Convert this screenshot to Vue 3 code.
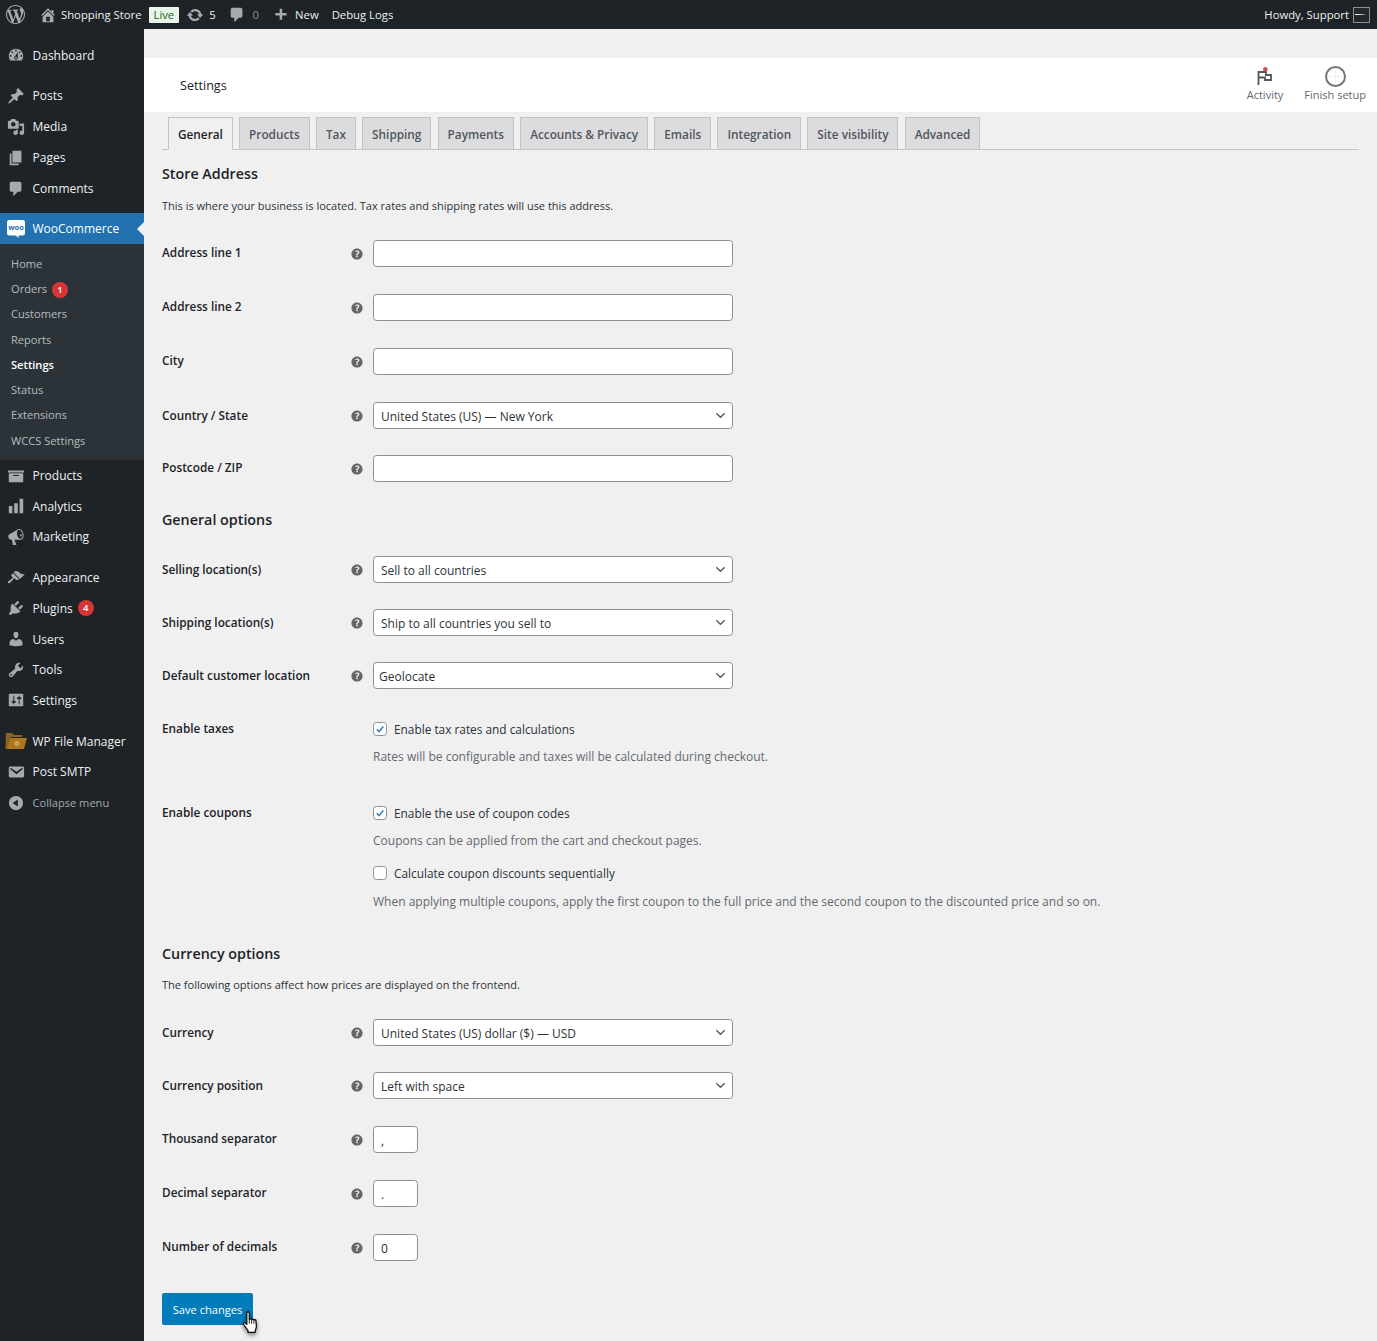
<script setup>
const P = {
  dashboard: 'M3.76 16h12.48c1.1-1.37 1.76-3.11 1.76-5 0-4.42-3.58-8-8-8s-8 3.58-8 8c0 1.89.66 3.63 1.76 5zM10 4c.55 0 1 .45 1 1s-.45 1-1 1-1-.45-1-1 .45-1 1-1zM6 6c.55 0 1 .45 1 1s-.45 1-1 1-1-.45-1-1 .45-1 1-1zm8 0c.55 0 1 .45 1 1s-.45 1-1 1-1-.45-1-1 .45-1 1-1zm-5.37 5.55L12 7v6c0 1.1-.9 2-2 2s-2-.9-2-2c0-.57.24-1.08.63-1.45zM4 10c.55 0 1 .45 1 1s-.45 1-1 1-1-.45-1-1 .45-1 1-1zm12 0c.55 0 1 .45 1 1s-.45 1-1 1-1-.45-1-1 .45-1 1-1zm-5 3c0-.55-.45-1-1-1s-1 .45-1 1 .45 1 1 1 1-.45 1-1z',
  pin: 'M10.44 3.02l1.82-1.82 6.36 6.35-1.83 1.82c-1.05-.68-2.48-.57-3.41.36l-.75.75c-.92.93-1.04 2.35-.35 3.41l-1.83 1.82-2.41-2.41-2.8 2.79c-.42.42-3.38 2.71-3.8 2.29s1.86-3.39 2.28-3.81l2.79-2.79L4.1 9.36l1.83-1.82c1.05.69 2.48.57 3.4-.36l.75-.75c.93-.92 1.05-2.35.36-3.41z',
  media: 'M13 11V4c0-.55-.45-1-1-1h-1.67L9 1H5L3.67 3H2c-.55 0-1 .45-1 1v7c0 .55.45 1 1 1h10c.55 0 1-.45 1-1zM7 4.5c1.38 0 2.5 1.12 2.5 2.5S8.38 9.5 7 9.5 4.5 8.38 4.5 7 5.62 4.5 7 4.5zM14 6h5v10.5c0 1.38-1.12 2.5-2.5 2.5S14 17.88 14 16.5s1.12-2.5 2.5-2.5c.17 0 .34.02.5.05V9h-3V6zm-4 8.05V13h2v3.5c0 1.38-1.12 2.5-2.5 2.5S7 17.88 7 16.5 8.12 14 9.5 14c.17 0 .34.02.5.05z',
  page: 'M6 15V2h10v13H6zm-1 1h8v2H3V5h2v11z',
  comment: 'M5 2h9c1.1 0 2 .9 2 2v7c0 1.1-.9 2-2 2h-2l-5 5v-5H5c-1.1 0-2-.9-2-2V4c0-1.1.9-2 2-2z',
  archive: 'M19 4v2H1V4h18zM2 7h16v10H2V7zm11 3V9H7v1h6z',
  chart: 'M18 18V2h-4v16h4zm-6 0V7H8v11h4zm-6 0v-8H2v8h4z',
  megaphone: 'M18.15 5.94c.46 1.62.38 3.22-.02 4.48-.42 1.28-1.26 2.18-2.3 2.48-.16.06-.26.06-.4.06-.06.02-.12.02-.18.02-.06.02-.14.02-.22.02h-6.8l2.22 5.5c.02.14-.06.26-.14.34-.08.1-.24.16-.34.16H6.95c-.1 0-.26-.06-.34-.16-.08-.08-.16-.2-.14-.34l-1-5.5H4.25l-.02-.02c-.5.06-1.08-.18-1.54-.62s-.88-1.08-1.06-1.88c-.24-.8-.2-1.56-.02-2.2.18-.62.58-1.08 1.06-1.3l.02-.02 9-5.4c.1-.06.18-.1.24-.16.06-.04.14-.08.24-.12.16-.08.28-.12.5-.18 1.04-.3 2.24.1 3.22.98s1.84 2.24 2.26 3.86zm-2.58 5.98h-.02c.4-.1.74-.34 1.04-.7.58-.7.86-1.76.86-3.04 0-.64-.1-1.3-.26-1.98-.34-1.36-1.02-2.5-1.78-3.24s-1.68-1.1-2.46-.88c-.82.22-1.4.96-1.7 2-.32 1.04-.28 2.36.06 3.72.38 1.36 1 2.5 1.8 3.24.78.74 1.62 1.1 2.46.88zm-.38-5.32c.22-.06.46.02.7.26.22.24.42.58.54 1s.14.8.04 1.1-.26.52-.48.58-.46-.02-.7-.26-.42-.58-.54-1c-.1-.42-.14-.8-.04-1.1s.26-.52.48-.58z',
  brush: 'M14.48 11.06L7.41 3.99l1.5-1.5c.5-.56 2.3-.47 3.51.32 1.21.8 1.43 1.28 2.91 2.1 1.18.64 2.45 1.26 4.45.85zm-.71.71L6.7 4.7 4.93 6.47c-.39.39-.39 1.02 0 1.41l1.06 1.06c.39.39.39 1.03 0 1.42-.6.6-1.43 1.11-2.21 1.69-.35.26-.7.53-1.01.84C1.43 13.23.4 14.84 1.15 15.6c.75.75 2.36-.28 3.7-1.63.31-.31.58-.66.84-1.01.58-.78 1.09-1.61 1.69-2.21.39-.39 1.02-.39 1.41 0l1.06 1.06c.39.39 1.02.39 1.41 0z',
  plug: 'M13.11 4.36L9.87 7.6 8 5.73l3.24-3.24c.35-.34 1.05-.2 1.56.32.52.51.66 1.21.31 1.55zm-8 1.77l.91-1.12 9.01 9.01-1.19.84c-.71.71-2.63 1.16-3.82 1.16H6.14L4.9 17.26c-.59.59-1.54.59-2.12 0-.59-.58-.59-1.53 0-2.12l1.24-1.24v-3.88c0-1.13.4-3.19 1.09-3.89zm7.26 3.97l3.24-3.24c.34-.35 1.04-.21 1.55.31.52.51.66 1.21.31 1.55l-3.24 3.25z',
  user: 'M10 9.25c-2.27 0-2.73-3.44-2.73-3.44C7 4.02 7.82 2 9.97 2c2.16 0 2.98 2.02 2.71 3.81 0 0-.41 3.44-2.68 3.44zm0 2.57L12.72 10c2.39 0 4.52 2.33 4.52 4.53v2.49s-3.65 1.13-7.24 1.13c-3.65 0-7.24-1.13-7.24-1.13v-2.49c0-2.25 1.94-4.48 4.47-4.48z',
  wrench: 'M16.68 9.77c-1.34 1.34-3.3 1.67-4.95.99l-5.41 6.52c-.99.99-2.59.99-3.58 0s-.99-2.59 0-3.57l6.52-5.42c-.68-1.65-.35-3.61.99-4.95 1.28-1.28 3.12-1.62 4.72-1.06l-2.89 2.89 2.82 2.82 2.86-2.87c.53 1.58.18 3.39-1.08 4.65zM3.81 16.21c.4.39 1.04.39 1.43 0 .4-.4.4-1.04 0-1.43-.39-.4-1.03-.4-1.43 0-.39.39-.39 1.03 0 1.43z',
  sliders: 'M18 16V4c0-.55-.45-1-1-1H3c-.55 0-1 .45-1 1v12c0 .55.45 1 1 1h14c.55 0 1-.45 1-1zM8 11h1c.55 0 1 .45 1 1s-.45 1-1 1H8v1.5c0 .28-.22.5-.5.5s-.5-.22-.5-.5V13H6c-.55 0-1-.45-1-1s.45-1 1-1h1V5.5c0-.28.22-.5.5-.5s.5.22.5.5V11zm5-2h-1c-.55 0-1-.45-1-1s.45-1 1-1h1V5.5c0-.28.22-.5.5-.5s.5.22.5.5V7h1c.55 0 1 .45 1 1s-.45 1-1 1h-1v5.5c0 .28-.22.5-.5.5s-.5-.22-.5-.5V9z',
  mail: 'M3.87 4h13.25C18.37 4 19 4.59 19 5.79v8.42c0 1.19-.63 1.79-1.88 1.79H3.87c-1.25 0-1.88-.6-1.88-1.79V5.79c0-1.2.63-1.79 1.88-1.79zm6.62 8.6l6.74-5.53c.24-.2.43-.66.13-1.07-.29-.41-.82-.42-1.17-.17l-5.7 3.86L4.8 5.83c-.35-.25-.88-.24-1.17.17-.3.41-.11.87.13 1.07z',
  collapse: 'M10 2.16c4.33 0 7.84 3.51 7.84 7.84s-3.51 7.84-7.84 7.84S2.16 14.33 2.16 10 5.71 2.16 10 2.16zm2 11.72V6.12L6.18 9.97z',
  home: 'M16 8.5l1.53 1.53-1.06 1.06L10 4.62l-6.47 6.47-1.06-1.06L10 2.5l4 4v-2h2v4zm-6-2.46l6 5.99V18H4v-5.97zM12 17v-5H8v5h4z',
  update: 'M10.2 3.28c3.53 0 6.43 2.61 6.92 6h2.08l-3.5 4-3.5-4h2.32c-.45-1.97-2.21-3.45-4.32-3.45-1.45 0-2.73.71-3.54 1.78L4.95 5.66C6.23 4.2 8.11 3.28 10.2 3.28zm-.4 13.44c-3.52 0-6.43-2.61-6.92-6H.8l3.5-4c1.17 1.33 2.33 2.67 3.5 4H5.48c.45 1.97 2.21 3.45 4.32 3.45 1.45 0 2.73-.71 3.54-1.78l1.71 1.95c-1.28 1.46-3.15 2.38-5.25 2.38z',
  plus: 'M17 7v3h-5v5H9v-5H4V7h5V2h3v5h5z',
  wp: 'M20 10c0-5.51-4.49-10-10-10C4.48 0 0 4.49 0 10c0 5.52 4.48 10 10 10 5.51 0 10-4.48 10-10zM7.78 15.37L4.37 6.22c.55-.02 1.17-.08 1.17-.08.5-.06.44-1.13-.06-1.11 0 0-1.45.11-2.37.11-.18 0-.37 0-.58-.01C4.12 2.69 6.87 1.11 10 1.11c2.33 0 4.45.87 6.05 2.34-.68-.11-1.65.39-1.65 1.58 0 .74.45 1.36.9 2.1.35.61.55 1.36.55 2.46 0 1.49-1.4 5-1.4 5l-3.03-8.37c.54-.02.82-.17.82-.17.5-.05.44-1.25-.06-1.22 0 0-1.44.12-2.38.12-.87 0-2.33-.12-2.33-.12-.5-.03-.56 1.2-.06 1.22l.92.08 1.26 3.41zM17.41 10c.24-.64.74-1.87.43-4.25.7 1.29 1.05 2.71 1.05 4.25 0 3.29-1.73 6.24-4.4 7.78.97-2.59 1.94-5.2 2.92-7.78zM6.1 18.09C3.12 16.65 1.11 13.53 1.11 10c0-1.3.23-2.48.72-3.59C3.25 10.3 4.67 14.2 6.1 18.09zm4.03-6.63l2.58 6.98c-.86.29-1.76.45-2.71.45-.79 0-1.57-.11-2.29-.33.81-2.38 1.62-4.74 2.42-7.1z',
  help: 'M17 10c0-3.87-3.14-7-7-7-3.87 0-7 3.13-7 7s3.13 7 7 7c3.86 0 7-3.13 7-7zm-6.3 1.48H9.14v-.43c0-.38.08-.7.24-.98s.46-.57.88-.89c.41-.29.68-.53.81-.71.14-.18.2-.39.2-.62 0-.25-.09-.44-.28-.58-.19-.13-.45-.19-.79-.19-.58 0-1.25.19-2 .57l-.64-1.28c.87-.49 1.8-.74 2.77-.74.81 0 1.45.2 1.92.58.48.39.71.91.71 1.55 0 .43-.09.8-.29 1.11-.19.32-.57.67-1.11 1.05-.38.28-.61.49-.71.63-.1.15-.15.34-.15.57v.36zm-1.47 2.23c-.19-.18-.28-.43-.28-.75 0-.33.09-.58.27-.76s.44-.27.78-.27c.33 0 .58.09.76.27.18.19.27.44.27.76 0 .31-.09.56-.27.74-.18.19-.43.28-.76.28-.34 0-.59-.09-.77-.27z'
}

const menuGroups = [
  [{ t: 'Dashboard', i: 'dashboard' }],
  [{ t: 'Posts', i: 'pin' }, { t: 'Media', i: 'media' }, { t: 'Pages', i: 'page' }, { t: 'Comments', i: 'comment' }],
  [{ t: 'WooCommerce', woo: true }],
  [{ t: 'Products', i: 'archive' }, { t: 'Analytics', i: 'chart' }, { t: 'Marketing', i: 'megaphone' }],
  [{ t: 'Appearance', i: 'brush' }, { t: 'Plugins', i: 'plug', badge: 4 }, { t: 'Users', i: 'user' }, { t: 'Tools', i: 'wrench' }, { t: 'Settings', i: 'sliders' }],
  [{ t: 'WP File Manager', fm: true }, { t: 'Post SMTP', i: 'mail' }, { t: 'Collapse menu', i: 'collapse', dim: true }]
]
const submenu = [
  { t: 'Home' }, { t: 'Orders', badge: 1 }, { t: 'Customers' }, { t: 'Reports' },
  { t: 'Settings', cur: true }, { t: 'Status' }, { t: 'Extensions' }, { t: 'WCCS Settings' }
]
const tabs = ['General', 'Products', 'Tax', 'Shipping', 'Payments', 'Accounts & Privacy', 'Emails', 'Integration', 'Site visibility', 'Advanced']

const addressRows = [
  { l: 'Address line 1', type: 'text' },
  { l: 'Address line 2', type: 'text' },
  { l: 'City', type: 'text' },
  { l: 'Country / State', type: 'select', v: 'United States (US) — New York' },
  { l: 'Postcode / ZIP', type: 'text' }
]
const generalRows = [
  { l: 'Selling location(s)', type: 'select', v: 'Sell to all countries' },
  { l: 'Shipping location(s)', type: 'select', v: 'Ship to all countries you sell to' },
  { l: 'Default customer location', type: 'select', v: 'Geolocate', native: true }
]
const currencyRows = [
  { l: 'Currency', type: 'select', v: 'United States (US) dollar ($) — USD' },
  { l: 'Currency position', type: 'select', v: 'Left with space' },
  { l: 'Thousand separator', type: 'short', v: ',' },
  { l: 'Decimal separator', type: 'short', v: '.' },
  { l: 'Number of decimals', type: 'short', v: '0' }
]
</script>

<template>
  <div class="page">
    <header class="adminbar">
      <div class="bar-left">
        <svg class="bar-wp" viewBox="0 0 20 20"><path :d="P.wp" /></svg>
        <svg class="bar-home" viewBox="0 0 20 20"><path :d="P.home" /></svg>
        <span class="bar-site">Shopping Store</span>
        <span class="live">Live</span>
        <svg class="bar-upd" viewBox="0 0 20 20"><path :d="P.update" /></svg>
        <span class="bar-n five">5</span>
        <svg class="bar-com" viewBox="0 0 20 20"><path :d="P.comment" /></svg>
        <span class="bar-n dim">0</span>
        <svg class="bar-plus" viewBox="0 0 20 20"><path :d="P.plus" /></svg>
        <span class="bar-new">New</span>
        <span class="bar-debug">Debug Logs</span>
      </div>
      <div class="bar-right">
        <span>Howdy, Support</span>
        <span class="avatar"><i></i></span>
      </div>
    </header>

    <div class="shell">
      <aside class="side">
        <div v-for="(g, gi) in menuGroups" :key="gi" class="mgroup">
          <template v-for="m in g" :key="m.t">
            <div class="mitem" :class="{ active: m.woo, dimmed: m.dim }">
              <span class="micon">
                <svg v-if="m.i" viewBox="0 0 20 20"><path :d="P[m.i]" /></svg>
                <svg v-else-if="m.woo" class="woo" viewBox="0 0 18 18">
                  <path d="M2.2 0h13.6A2.2 2.2 0 0 1 18 2.2v11a2.2 2.2 0 0 1-2.2 2.2h-4.6l.9 2.6-3.6-2.6H2.2A2.2 2.2 0 0 1 0 13.2v-11A2.2 2.2 0 0 1 2.2 0z" fill="#fff" />
                  <text x="9" y="10.4" text-anchor="middle" class="woo-t">woo</text>
                </svg>
                <svg v-else-if="m.fm" class="fm" viewBox="0 0 22 18">
                  <path d="M1 1h6l2 2h8v2H6L2 17H0.4z" fill="#8a6320" />
                  <path d="M5.5 6H22l-3 11H1.6z" fill="#b0761f" />
                  <circle cx="12" cy="11.5" r="2.6" fill="#caa050" />
                </svg>
              </span>
              <span class="mlabel">{{ m.t }}</span>
              <span v-if="m.badge" class="badge">{{ m.badge }}</span>
              <span v-if="m.woo" class="notch"></span>
            </div>
            <div v-if="m.woo" class="sub">
              <div v-for="s in submenu" :key="s.t" class="sitem" :class="{ cur: s.cur }">
                {{ s.t }}<span v-if="s.badge" class="badge">{{ s.badge }}</span>
              </div>
            </div>
          </template>
        </div>
      </aside>

      <main class="main">
        <div class="wc-header">
          <span class="wc-title">Settings</span>
          <div class="wc-actions">
            <div class="wc-act activity">
              <svg class="flag" viewBox="0 0 16 18">
                <path d="M1.5 18V5H9V8H14V13H8V10.5H1.5" fill="none" stroke="#50575e" stroke-width="1.8" />
                <circle cx="8.3" cy="2.3" r="2.3" fill="#d94f4f" />
              </svg>
              <span>Activity</span>
            </div>
            <div class="wc-act setup">
              <span class="ring"></span>
              <span>Finish setup</span>
            </div>
          </div>
        </div>

        <div class="wrap">
          <nav class="tabs">
            <span v-for="(t, i) in tabs" :key="t" class="tab" :class="{ on: i === 0 }">{{ t }}</span>
          </nav>

          <h2 class="h-first">Store Address</h2>
          <p class="intro">This is where your business is located. Tax rates and shipping rates will use this address.</p>
          <div class="rows addr">
            <div v-for="r in addressRows" :key="r.l" class="row" :class="r.type">
              <label class="lab">{{ r.l }}</label>
              <svg class="help" viewBox="0 0 20 20"><path :d="P.help" /></svg>
              <div v-if="r.type === 'select'" class="sel"><span>{{ r.v }}</span><svg viewBox="0 0 12 8"><path d="M1.2 1.5 6 6l4.8-4.5" /></svg></div>
              <input v-else class="inp" type="text" />
            </div>
          </div>

          <h2 class="h-gen">General options</h2>
          <div class="rows gen">
            <div v-for="r in generalRows" :key="r.l" class="row" :class="r.type">
              <label class="lab">{{ r.l }}</label>
              <svg class="help" viewBox="0 0 20 20"><path :d="P.help" /></svg>
              <div class="sel" :class="{ nat: r.native }"><span>{{ r.v }}</span><svg viewBox="0 0 12 8"><path d="M1.2 1.5 6 6l4.8-4.5" /></svg></div>
            </div>
          </div>

          <div class="opt tax">
            <label class="lab">Enable taxes</label>
            <div class="opt-body">
              <div class="chk"><span class="box on"><svg viewBox="0 0 16 16"><path d="M3.6 8.2 6.7 11.4 12.5 4.6" /></svg></span>Enable tax rates and calculations</div>
              <p class="hint">Rates will be configurable and taxes will be calculated during checkout.</p>
            </div>
          </div>

          <div class="opt coupons">
            <label class="lab">Enable coupons</label>
            <div class="opt-body">
              <div class="chk"><span class="box on"><svg viewBox="0 0 16 16"><path d="M3.6 8.2 6.7 11.4 12.5 4.6" /></svg></span>Enable the use of coupon codes</div>
              <p class="hint">Coupons can be applied from the cart and checkout pages.</p>
              <div class="chk second"><span class="box"></span>Calculate coupon discounts sequentially</div>
              <p class="hint long">When applying multiple coupons, apply the first coupon to the full price and the second coupon to the discounted price and so on.</p>
            </div>
          </div>

          <h2 class="h-cur">Currency options</h2>
          <p class="intro cur-intro">The following options affect how prices are displayed on the frontend.</p>
          <div class="rows curr">
            <div v-for="r in currencyRows" :key="r.l" class="row" :class="r.type">
              <label class="lab">{{ r.l }}</label>
              <svg class="help" viewBox="0 0 20 20"><path :d="P.help" /></svg>
              <div v-if="r.type === 'select'" class="sel"><span>{{ r.v }}</span><svg viewBox="0 0 12 8"><path d="M1.2 1.5 6 6l4.8-4.5" /></svg></div>
              <input v-else class="inp short" type="text" :value="r.v" />
            </div>
          </div>

          <div class="save-wrap">
            <button class="save" type="button">Save changes</button>
            <svg class="cursor" viewBox="0 0 20 26">
              <path d="M6 2.2c.9-.9 2.3-.3 2.3 1v6.4c.3-.9 2-.9 2.3.2.4-.9 2-.8 2.3.3.5-.7 2-.5 2.1.8l.4 5.1c.1 2-.6 3.3-1.2 4.7v1.6H7v-1.8c-1.2-1.6-3.5-4.4-4.4-6.3-.5-1.2.9-2.2 1.9-1.2l1.3 1.4V3.2c0-.4 0-.7.2-1z" fill="#fff" stroke="#111" stroke-width="1.3" stroke-linejoin="round" />
              <path d="M8.3 9.6v4M10.6 9.8v4M12.9 10.2v3.6" stroke="#111" stroke-width=".9" fill="none" />
            </svg>
          </div>
        </div>
      </main>
    </div>
  </div>
</template>

<style>
html, body { margin: 0; background: #f0f0f1; }
</style>

<style scoped>
.page {
  width: 1377px;
  height: 1341px;
  overflow: hidden;
  font-family: "Open Sans", "Noto Sans", sans-serif;
  color: #1d2327;
  background: #f0f0f1;
  --fs: 11.8px;
}
.adminbar {
  height: 29px;
  background: #1d2327;
  display: flex;
  justify-content: space-between;
  align-items: center;
  color: #f0f0f1;
  font-size: 11.3px;
}
.bar-left, .bar-right { display: flex; align-items: center; }
.bar-left svg { fill: #a7aaad; display: block; }
.bar-wp { width: 19px; height: 19px; margin-left: 6px; }
.bar-home { width: 18px; height: 18px; margin-left: 14px; }
.bar-site { margin-left: 4px; }
.live {
  background: #e8f5e9;
  color: #1b5e20;
  font-size: 11.2px;
  margin-left: 7px;
  height: 16px;
  line-height: 16px;
  padding: 0 5px;
  border-radius: 1px;
}
.bar-upd { width: 18px; height: 18px; margin-left: 7px; }
.bar-n.five { margin-left: 5px; }
.bar-n.dim { color: #8c8f94; margin-left: 6.5px; }
.bar-com { width: 18px; height: 18px; margin-left: 12.5px; }
.bar-plus { width: 17px; height: 17px; margin: 2px 0 0 13px; }
.bar-new { margin-left: 6px; }
.bar-debug { margin-left: 13px; }
.bar-right { gap: 4px; margin-right: 7px; }
.avatar {
  width: 17px;
  height: 16px;
  border: 1px solid #8c8f94;
  background: #23282d;
  display: flex;
  align-items: center;
  padding-left: 1px;
  box-sizing: border-box;
}
.avatar i { width: 10px; height: 1.6px; background: linear-gradient(90deg, #eee 40%, #666); display: block; }

.shell { display: flex; height: 1312px; }
.side {
  width: 144px;
  flex: none;
  background: #1d2327;
  padding-top: 11.2px;
  box-sizing: border-box;
}
.mgroup { margin-bottom: 10.1px; }
.mgroup:nth-child(1) { margin-bottom: 9.5px; }
.mgroup:nth-child(2) { margin-bottom: 9.1px; }
.mgroup:nth-child(2) .mitem { height: 31px; }
.mgroup:nth-child(3) { margin-bottom: 0; }
.mgroup:nth-child(4), .mgroup:nth-child(5) { margin-bottom: 10.4px; }
.mitem {
  height: 30.6px;
  display: flex;
  align-items: center;
  position: relative;
  color: #f0f0f1;
  font-size: 12px;
}
.micon {
  width: 32.5px;
  height: 30.6px;
  flex: none;
  display: flex;
  align-items: center;
  justify-content: center;
  padding-right: 0.5px;
  box-sizing: border-box;
}
.micon svg { width: 18px; height: 18px; fill: #a7aaad; display: block; }
.micon .woo { fill: none; }
.micon .fm { width: 22px; height: 18px; margin-left: -1px; }
.woo-t { font-size: 7.4px; font-weight: 700; fill: #2271b1; font-family: "Open Sans", sans-serif; }
.mitem.active { background: #2271b1; color: #fff; }
.mitem.dimmed { color: #a7aaad; font-size: 11.1px; margin-top: 0.5px; }
.notch {
  position: absolute;
  right: 0;
  top: 50%;
  margin-top: -7px;
  border: 7px solid transparent;
  border-right-color: #f0f0f1;
  border-left-width: 0;
}
.badge {
  display: inline-block;
  background: #d63638;
  color: #fff;
  width: 16px;
  height: 16px;
  line-height: 16px;
  border-radius: 50%;
  font-size: 9.5px;
  text-align: center;
  margin-left: 5px;
  font-weight: 600;
}
.sub {
  background: #2c3338;
  padding: 6.7px 0 7.4px;
}
.sitem {
  height: 25.3px;
  line-height: 25.3px;
  padding-left: 11px;
  font-size: 11.1px;
  color: rgba(240, 246, 252, 0.7);
}
.sitem.cur { color: #fff; font-weight: 600; }

.main { flex: 1; min-width: 0; padding-top: 29px; }
.wc-header {
  height: 54px;
  background: #fff;
  display: flex;
  justify-content: space-between;
  align-items: center;
}
.wc-title { margin-left: 36px; font-size: 12.6px; color: #1d2327; }
.wc-actions { display: flex; align-items: stretch; height: 100%; }
.wc-act {
  display: flex;
  flex-direction: column;
  align-items: center;
  justify-content: flex-end;
  padding-bottom: 10px;
  box-sizing: border-box;
  font-size: 11px;
  color: #646970;
}
.activity { margin-right: 21px; }
.setup { margin-right: 11px; }
.flag { width: 16px; height: 18px; margin-bottom: 2px; }
.ring {
  width: 21px;
  height: 21px;
  border: 2px solid #757575;
  border-radius: 50%;
  box-sizing: border-box;
  background:
    linear-gradient(#f3f3f3, #f3f3f3) center / 100% 1px no-repeat,
    linear-gradient(#f3f3f3, #f3f3f3) center / 1px 100% no-repeat;
}

.wrap { padding: 5px 18px 0; }
.tabs {
  height: 33px;
  box-sizing: border-box;
  border-bottom: 1px solid #c3c4c7;
  padding-left: 6px;
  display: flex;
  gap: 6.2px;
  align-items: flex-start;
}
.tab {
  height: 33px;
  line-height: 33px;
  box-sizing: border-box;
  border: 1px solid #c3c4c7;
  background: #dcdcde;
  padding: 0 9px;
  font-size: 11.8px;
  font-weight: 600;
  color: #50575e;
}
.tab.on { background: #f0f0f1; border-bottom-color: #f0f0f1; color: #1d2327; }

h2 { margin: 0; font-size: 14.3px; font-weight: 600; line-height: 20px; color: #1d2327; }
.h-first { margin-top: 13.5px; }
.intro { margin: 12px 0 0; font-size: 11px; line-height: 20px; color: #2c3338; }
.rows.addr { margin-top: 24.5px; }
.row {
  display: flex;
  align-items: center;
  height: 27px;
  margin-bottom: 27px;
}
.row.select { margin-bottom: 26px; }
.lab {
  width: 186.5px;
  flex: none;
  font-size: var(--fs);
  font-weight: 600;
  color: #1d2327;
  display: block;
  line-height: 27px;
  margin-top: -2px;
}
.row.select .lab { margin-top: 0; }
.help { width: 16px; height: 16px; flex: none; margin-right: 8.5px; fill: #666; }
.inp, .sel {
  width: 360px;
  height: 27px;
  box-sizing: border-box;
  border: 1px solid #8c8f94;
  border-radius: 3.6px;
  background: #fff;
  flex: none;
  font: inherit;
  font-size: 12px;
  color: #2c3338;
  outline: none;
}
.sel {
  display: flex;
  align-items: center;
  justify-content: space-between;
  padding: 1px 6px 0 7px;
}
.sel.nat { padding-left: 5px; }
.sel svg { width: 11px; height: 7px; fill: none; stroke: #50575e; stroke-width: 1.5; margin-top: -1px; }
.inp.short { width: 45px; padding: 2px 7px 0; }

.h-gen { margin-top: 28px; }
.rows.gen { margin-top: 26px; }
.opt { display: flex; align-items: flex-start; }
.opt .lab { width: 211px; line-height: 20px; margin-top: 0; }
.opt-body { font-size: 11.85px; }
.tax { margin-top: 29px; }
.coupons { margin-top: 35px; }
.chk { display: flex; align-items: center; height: 20px; color: #2c3338; margin-top: 1px; }
.second { margin-top: 12px; }
.box {
  width: 14px;
  height: 14px;
  box-sizing: border-box;
  border: 1px solid #8c8f94;
  border-radius: 3.6px;
  background: #fff;
  margin-right: 7px;
  display: block;
}
.box svg { display: block; width: 12px; height: 12px; fill: none; stroke: #3582c4; stroke-width: 2; }
.hint { margin: 8px 0 0; line-height: 20px; color: #646970; font-size: 12px; }
.hint.long { margin-top: 9px; }
.h-cur { margin-top: 32px; }
.cur-intro { margin-top: 11px; }
.rows.curr { margin-top: 24px; }
.rows.curr .row.select + .row.select { margin-bottom: 27px; }
.save-wrap { position: relative; width: 91px; margin-top: 32px; }
.save {
  width: 91px;
  height: 32px;
  background: #007cba;
  color: #fff;
  border: 0;
  border-radius: 2px;
  font: inherit;
  font-size: 11.1px;
  padding: 0;
}
.cursor {
  position: absolute;
  left: 79px;
  top: 17px;
  width: 20px;
  height: 26px;
  filter: drop-shadow(0 2px 2px rgba(0,0,0,.5));
}
</style>
